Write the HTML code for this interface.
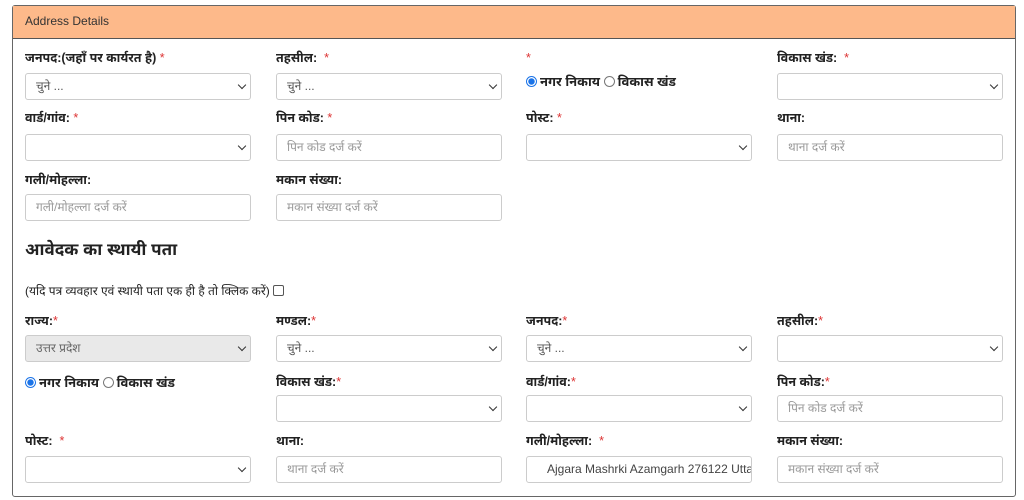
<!DOCTYPE html>
<html><head><meta charset="utf-8"><style>
body{margin:0;width:1024px;height:500px;background:#fff;font-family:"Liberation Sans","Noto Sans Devanagari","Lohit Devanagari","FreeSans",sans-serif;color:#222;position:relative;overflow:hidden}
.panel{position:absolute;left:12px;top:5px;width:1002px;height:490px;border:1px solid #666;border-radius:3px}
.hdr{position:absolute;left:0;top:0;right:0;height:32px;background:#fdb98a;border-bottom:1px solid #555;font-size:12px;line-height:30px;padding-left:12px;color:#333}
.l{position:absolute;font-size:12.5px;font-weight:bold;line-height:16px;white-space:nowrap;color:#222}
.r{color:#d33;font-weight:normal}
.b{position:absolute;width:224px;height:25px;border:1px solid #ccc;border-radius:3px;background:#fff;font-size:12px;line-height:25px;color:#999;padding-left:10px;box-sizing:content-box}
.b.s{color:#555}
.b.s::after{content:"";position:absolute;right:5px;top:8px;width:5px;height:5px;border-right:1.6px solid #333;border-bottom:1.6px solid #333;transform:rotate(45deg)}
.b.dis{background:#e9e9e9}
.rad{position:absolute;font-size:13px;font-weight:bold;line-height:16px;white-space:nowrap}
.dot{display:inline-block;width:9px;height:9px;border-radius:50%;border:1px solid #777;vertical-align:-1px;margin-right:3px;background:#fff}
.dot.on{border:1px solid #1a73e8;background:radial-gradient(circle,#1a73e8 45%,#fff 55%)}
</style></head><body>
<div class="panel"><div class="hdr">Address Details</div></div>

<div class="l" style="left:25px;top:50px">जनपद:(जहाँ पर कार्यरत है) <span class="r">*</span></div>
<div class="b s" style="left:25px;top:73px;width:214px;padding-left:10px">चुने ...</div>
<div class="l" style="left:276px;top:50px">तहसील: &nbsp;<span class="r">*</span></div>
<div class="b s" style="left:276px;top:73px;width:214px">चुने ...</div>
<div class="l" style="left:526px;top:50px"><span class="r">*</span></div>
<div class="rad" style="left:526px;top:74px"><span class="dot on"></span>नगर निकाय <span class="dot"></span>विकास खंड</div>
<div class="l" style="left:777px;top:50px">विकास खंड: &nbsp;<span class="r">*</span></div>
<div class="b s" style="left:777px;top:73px;width:214px"></div>

<div class="l" style="left:25px;top:110px">वार्ड/गांव: <span class="r">*</span></div>
<div class="b s" style="left:25px;top:134px;width:214px"></div>
<div class="l" style="left:276px;top:110px">पिन कोड: <span class="r">*</span></div>
<div class="b" style="left:276px;top:134px;width:214px">पिन कोड दर्ज करें</div>
<div class="l" style="left:526px;top:110px">पोस्ट: <span class="r">*</span></div>
<div class="b s" style="left:526px;top:134px;width:214px"></div>
<div class="l" style="left:777px;top:110px">थाना:</div>
<div class="b" style="left:777px;top:134px;width:214px">थाना दर्ज करें</div>

<div class="l" style="left:25px;top:172px">गली/मोहल्ला:</div>
<div class="b" style="left:25px;top:194px;width:214px">गली/मोहल्ला दर्ज करें</div>
<div class="l" style="left:276px;top:172px">मकान संख्या:</div>
<div class="b" style="left:276px;top:194px;width:214px">मकान संख्या दर्ज करें</div>

<div class="l" style="left:25px;top:239px;font-size:17px;line-height:22px">आवेदक का स्थायी पता</div>
<div style="position:absolute;left:25px;top:283px;font-size:12px;line-height:16px;white-space:nowrap">(यदि पत्र व्यवहार एवं स्थायी पता एक ही है तो क्लिक करें) <span style="display:inline-block;width:9px;height:9px;border:1px solid #555;border-radius:2px;vertical-align:-1px"></span></div>

<div class="l" style="left:25px;top:313px">राज्य:<span class="r">*</span></div>
<div class="b s dis" style="left:25px;top:335px;width:214px;color:#666">उत्तर प्रदेश</div>
<div class="l" style="left:276px;top:313px">मण्डल:<span class="r">*</span></div>
<div class="b s" style="left:276px;top:335px;width:214px">चुने ...</div>
<div class="l" style="left:526px;top:313px">जनपद:<span class="r">*</span></div>
<div class="b s" style="left:526px;top:335px;width:214px">चुने ...</div>
<div class="l" style="left:777px;top:313px">तहसील:<span class="r">*</span></div>
<div class="b s" style="left:777px;top:335px;width:214px"></div>

<div class="rad" style="left:25px;top:375px"><span class="dot on"></span>नगर निकाय <span class="dot"></span>विकास खंड</div>
<div class="l" style="left:276px;top:374px">विकास खंड:<span class="r">*</span></div>
<div class="b s" style="left:276px;top:395px;width:214px"></div>
<div class="l" style="left:526px;top:374px">वार्ड/गांव:<span class="r">*</span></div>
<div class="b s" style="left:526px;top:395px;width:214px"></div>
<div class="l" style="left:777px;top:374px">पिन कोड:<span class="r">*</span></div>
<div class="b" style="left:777px;top:395px;width:214px">पिन कोड दर्ज करें</div>

<div class="l" style="left:25px;top:433px">पोस्ट: &nbsp;<span class="r">*</span></div>
<div class="b s" style="left:25px;top:456px;width:214px"></div>
<div class="l" style="left:276px;top:433px">थाना:</div>
<div class="b" style="left:276px;top:456px;width:214px">थाना दर्ज करें</div>
<div class="l" style="left:526px;top:433px">गली/मोहल्ला: &nbsp;<span class="r">*</span></div>
<div class="b" style="left:526px;top:456px;width:204px;padding-left:20px;color:#444;overflow:hidden;white-space:nowrap">Ajgara Mashrki Azamgarh 276122 Utta</div>
<div class="l" style="left:777px;top:433px">मकान संख्या:</div>
<div class="b" style="left:777px;top:456px;width:214px">मकान संख्या दर्ज करें</div>
</body></html>
